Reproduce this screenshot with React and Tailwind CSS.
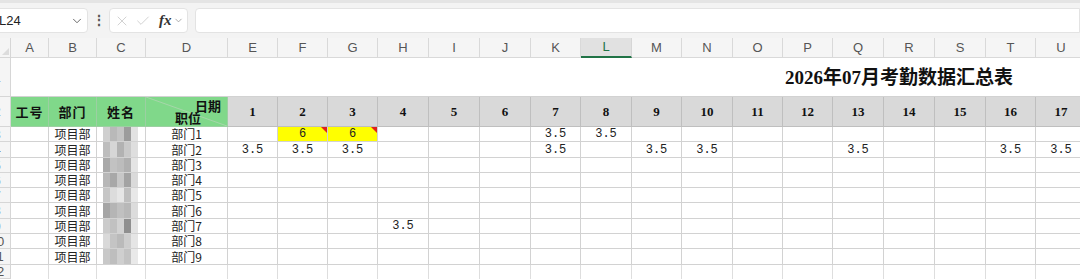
import React from "react";
import { ChevronDown, X, Check } from "lucide-react";

const cols = ["E", "F", "G", "H", "I", "J", "K", "L", "M", "N", "O", "P", "Q", "R", "S", "T", "U"];
const letters = ["A", "B", "C", "D", ...cols];

const vals = [
  { F: "6", G: "6", K: "3.5", L: "3.5" },
  { E: "3.5", F: "3.5", G: "3.5", K: "3.5", M: "3.5", N: "3.5", Q: "3.5", T: "3.5", U: "3.5" },
  {},
  {},
  {},
  {},
  { H: "3.5" },
  {},
  {},
];

const shades = [
  ["#cfcfcf", "#b9b9b9", "#c4c4c4", "#9c9c9c", "#e2e2e2"],
  ["#bdbdbd", "#d6d6d6", "#b2b2b2", "#c9c9c9", "#dedede"],
  ["#a9a9a9", "#c2c2c2", "#bcbcbc", "#b0b0b0", "#e4e4e4"],
  ["#b7b7b7", "#a8a8a8", "#c7c7c7", "#a3a3a3", "#dadada"],
  ["#c6c6c6", "#dcdcdc", "#e6e6e6", "#bfbfbf", "#e8e8e8"],
  ["#a5a5a5", "#b5b5b5", "#c0c0c0", "#b8b8b8", "#dcdcdc"],
  ["#cbcbcb", "#c1c1c1", "#d2d2d2", "#8f8f8f", "#e3e3e3"],
  ["#d9d9d9", "#c4c4c4", "#bababa", "#cdcdcd", "#e5e5e5"],
  ["#c8c8c8", "#bebebe", "#cfcfcf", "#c3c3c3", "#e9e9e9"],
];

const cell = "border-r border-b border-[#d2d2d2] flex items-center justify-center overflow-hidden whitespace-nowrap";
const mono = "font-['Liberation_Mono',monospace] text-[12px] leading-[12px] text-[#222]";
const cjk = "font-['Noto_Sans_CJK_SC','Noto_Sans',sans-serif] text-[12px] leading-[12px] text-[#222]";

function RowNum({ n }) {
  return (
    <div className="bg-[#f5f5f5] border-r border-b border-[#d6d6d6] overflow-hidden flex items-center">
      <div className="w-[20px] -ml-[13px] shrink-0 text-center text-[13px] leading-none text-[#555]">{n}</div>
    </div>
  );
}

export default function App() {
  return (
    <div className="w-[1080px] h-[279px] overflow-hidden bg-white font-['Liberation_Sans','Noto_Sans_CJK_SC',sans-serif]">
      {/* formula bar */}
      <div className="h-[38px] bg-[#f3f3f3] border-t-[3px] border-[#e4e4e4] flex items-start pt-[5px]">
        <div className="-ml-[11px] w-[99px] h-[25px] bg-white rounded-[4px] border border-[#e3e3e3] flex items-center pl-[9px] pr-[3px]">
          <span className="text-[13px] text-[#222] flex-1">L24</span>
          <ChevronDown size={14} strokeWidth={1.5} className="text-[#555]" />
        </div>
        <div className="w-[21px] h-[25px] flex items-center justify-center text-[#555] text-[14px] font-bold">⋮</div>
        <div className="w-[79px] h-[25px] bg-white rounded-[4px] border border-[#e3e3e3] flex items-center pl-[4px] gap-[5px]">
          <X size={16} strokeWidth={1} className="text-[#bbb]" />
          <Check size={16} strokeWidth={1} className="text-[#bbb]" />
          <span className="ml-[3px] font-['Liberation_Serif',serif] italic font-bold text-[15px] text-[#333] leading-none">fx</span>
          <ChevronDown size={11} strokeWidth={1.5} className="text-[#888] -ml-[4px]" />
        </div>
        <div className="ml-[7px] flex-1 h-[25px] bg-white rounded-l-[4px] border border-[#e3e3e3]" />
      </div>

      {/* sheet */}
      <div className="grid grid-cols-[11px_38px_48px_49px_82px_50px_50px_50px_51px_51px_51px_50px_51px_50px_51px_50px_50px_51px_51px_51px_50px_51px] grid-rows-[20px_39px_30px_15px_16px_15px_15px_15px_16px_15px_15px_16px_14px] w-[1086px]">
        {/* column header */}
        <div className="bg-[#f5f5f5] border-r border-b border-[#d6d6d6] relative">
          <div className="absolute right-[1px] bottom-[2px] w-0 h-0 border-l-[7px] border-l-transparent border-b-[7px] border-b-[#dcdcdc]" />
        </div>
        {letters.map((l) =>
          l === "L" ? (
            <div key={l} className="bg-[#e1e1e1] border-r border-b-2 border-r-[#d6d6d6] border-b-[#217346] flex items-center justify-center text-[13px] text-[#217346]">
              {l}
            </div>
          ) : (
            <div key={l} className="bg-[#f5f5f5] border-r border-b border-[#d9d9d9] flex items-center justify-center text-[13px] text-[#555]">
              {l}
            </div>
          )
        )}

        {/* row 1 title */}
        <RowNum n={1} />
        <div className="col-span-21 border-b border-[#d2d2d2] flex items-center pl-[774px] whitespace-nowrap">
          <span className="font-['Liberation_Serif','Noto_Sans_CJK_SC',serif] font-bold text-[19px] text-[#111] leading-none">
            2026年07月考勤数据汇总表
          </span>
        </div>

        {/* row 2 header */}
        <RowNum n={2} />
        {["工号", "部门", "姓名"].map((t) => (
          <div key={t} className="bg-[#80d88a] border-r border-b border-[#9ccfa2] flex items-center justify-center font-['Noto_Sans_CJK_SC',sans-serif] font-bold text-[13px] text-[#111] tracking-[1px]">
            {t}
          </div>
        ))}
        <div className="bg-[#80d88a] border-r border-b border-[#9ccfa2] relative font-['Noto_Sans_CJK_SC',sans-serif] font-bold text-[13px] text-[#111]">
          <svg className="absolute inset-0" width="81" height="29">
            <line x1="0" y1="0" x2="81" y2="29" stroke="#a6d6aa" strokeWidth="1" />
          </svg>
          <span className="absolute right-[6px] top-[2px] leading-[13px]">日期</span>
          <span className="absolute left-[29px] bottom-[2px] leading-[13px]">职位</span>
        </div>
        {cols.map((c, i) => (
          <div key={c} className="bg-[#d9d9d9] border-r border-b border-[#bfbfbf] flex items-center justify-center font-['Liberation_Serif',serif] font-bold text-[13px] text-[#111]">
            {i + 1}
          </div>
        ))}

        {/* data rows */}
        {vals.map((v, r) => (
          <React.Fragment key={r}>
            <RowNum n={r + 3} />
            <div className={cell} />
            <div className={`${cell} ${cjk}`}>项目部</div>
            <div className={`${cell} justify-start pl-[6px]`}>
              <div className="flex h-full">
                {shades[r].map((s, k) => (
                  <div key={k} className="w-[7px] h-full" style={{ backgroundColor: s }} />
                ))}
              </div>
            </div>
            <div className={`${cell} ${cjk}`}>部门{r + 1}</div>
            {cols.map((c) => {
              const yellow = r === 0 && (c === "F" || c === "G");
              return (
                <div key={c} className={`${cell} ${mono} relative ${yellow ? "bg-[#ffff00]" : ""}`}>
                  {v[c] || ""}
                  {yellow && (
                    <div className="absolute right-0 top-0 w-0 h-0 border-l-[6px] border-l-transparent border-t-[6px] border-t-[#e02020]" />
                  )}
                </div>
              );
            })}
          </React.Fragment>
        ))}

        {/* row 12 */}
        <RowNum n={12} />
        {letters.map((l) => (
          <div key={l} className="border-r border-[#dedede]" />
        ))}
      </div>
    </div>
  );
}
